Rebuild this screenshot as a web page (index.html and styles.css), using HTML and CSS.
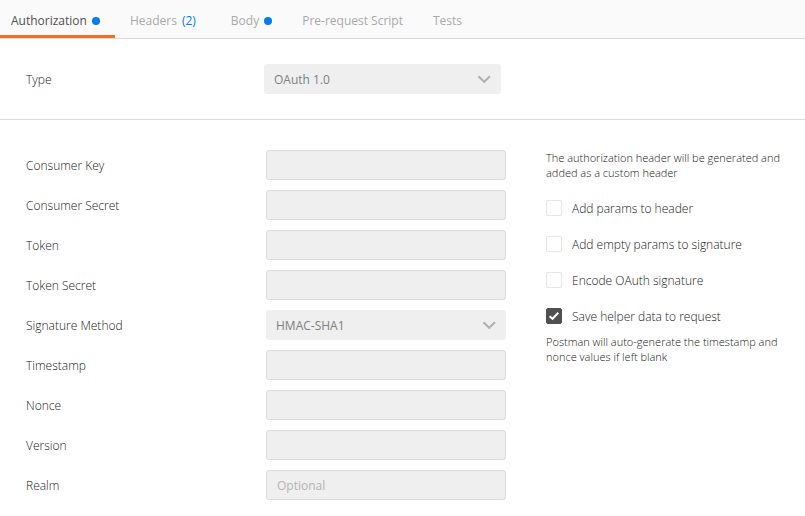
FILE: index.html
```html
<!DOCTYPE html>
<html lang="en">
<head>
<meta charset="utf-8">
<meta name="viewport" content="width=device-width, initial-scale=1">
<title>Authorization</title>
<link rel="stylesheet" href="styles.css">
</head>
<body>
<nav class="tabs">
  <button type="button" class="tab tab-active">Authorization<span class="dot"></span></button>
  <button type="button" class="tab tab-headers">Headers<span class="count">(2)</span></button>
  <button type="button" class="tab">Body<span class="dot"></span></button>
  <button type="button" class="tab">Pre-request Script</button>
  <button type="button" class="tab">Tests</button>
</nav>
<form>
  <section class="type-section">
    <label class="label" for="type">Type</label>
    <div class="select-wrap">
      <select id="type" class="select"><option>OAuth 1.0</option></select>
      <svg class="chevron" viewBox="0 0 14 9" aria-hidden="true"><path d="M1.4 1.2 7.2 6.8 13 1.2"/></svg>
    </div>
  </section>
  <section class="details">
    <div class="fields">
      <div class="field"><label class="label" for="consumer-key">Consumer Key</label><input id="consumer-key" class="input" type="text"></div>
      <div class="field"><label class="label" for="consumer-secret">Consumer Secret</label><input id="consumer-secret" class="input" type="text"></div>
      <div class="field"><label class="label" for="token">Token</label><input id="token" class="input" type="text"></div>
      <div class="field"><label class="label" for="token-secret">Token Secret</label><input id="token-secret" class="input" type="text"></div>
      <div class="field">
        <label class="label" for="method">Signature Method</label>
        <div class="select-wrap">
          <select id="method" class="select"><option>HMAC-SHA1</option></select>
          <svg class="chevron" viewBox="0 0 14 9" aria-hidden="true"><path d="M1.4 1.2 7.2 6.8 13 1.2"/></svg>
        </div>
      </div>
      <div class="field"><label class="label" for="timestamp">Timestamp</label><input id="timestamp" class="input" type="text"></div>
      <div class="field"><label class="label" for="nonce">Nonce</label><input id="nonce" class="input" type="text"></div>
      <div class="field"><label class="label" for="version">Version</label><input id="version" class="input" type="text"></div>
      <div class="field"><label class="label" for="realm">Realm</label><input id="realm" class="input" type="text" placeholder="Optional"></div>
    </div>
    <div class="options">
      <p class="note">The authorization header will be generated and added as a custom header</p>
      <div class="checks">
        <label class="check"><span class="box-wrap"><input type="checkbox" class="box"></span>Add params to header</label>
        <label class="check"><span class="box-wrap"><input type="checkbox" class="box"></span>Add empty params to signature</label>
        <label class="check"><span class="box-wrap"><input type="checkbox" class="box"></span>Encode OAuth signature</label>
        <label class="check"><span class="box-wrap"><input type="checkbox" class="box" checked><svg class="tick" viewBox="0 0 16 16" aria-hidden="true"><path d="M3.6 8.2 6.5 10.8 12.3 4.8"/></svg></span>Save helper data to request</label>
      </div>
      <p class="note">Postman will auto-generate the timestamp and nonce values if left blank</p>
    </div>
  </section>
</form>
</body>
</html>
```
FILE: styles.css
```css
* {
  box-sizing: border-box;
}

body {
  margin: 0;
  background: #fff;
  color: #505050;
  font: 12px/18px "Open Sans", sans-serif;
}

.tabs {
  display: flex;
  background: #fafafa;
  border-bottom: 1px solid #d9d9d9;
}

.tab {
  display: flex;
  align-items: center;
  gap: 5px;
  height: 38px;
  padding: 7px 15px 0;
  border: 0;
  border-bottom: 3px solid transparent;
  background: none;
  color: #a9a9a9;
  font: inherit;
  white-space: nowrap;
}

.tab-active {
  padding-left: 11px;
  border-bottom-color: #f07026;
  color: #505050;
}

.tab-headers {
  padding-right: 20px;
}

.dot {
  width: 8px;
  height: 8px;
  border-radius: 50%;
  background: #027bf3;
}

.count {
  color: #027bf3;
}

.type-section {
  display: grid;
  grid-template-columns: 238px 237px;
  align-items: center;
  padding: 25px 26px;
  border-bottom: 1px solid #d9d9d9;
}

.details {
  display: grid;
  grid-template-columns: 480px 1fr;
  gap: 40px;
  padding: 30px 10px 16px 26px;
}

.fields {
  display: grid;
  gap: 10px;
}

.field {
  display: grid;
  grid-template-columns: 1fr 1fr;
  align-items: center;
}

.label,
.options {
  color: #202020;
  font-weight: 300;
}

.label {
  padding-top: 2px;
}

.input,
.select {
  display: block;
  width: 100%;
  height: 30px;
  margin: 0;
  border: 1px solid #dbdbdb;
  border-radius: 3px;
  background: #efefef;
  color: #808080;
  font: inherit;
}

.input {
  padding: 0 10px;
}

.input::placeholder {
  color: #b4b4b4;
  opacity: 1;
}

.select {
  appearance: none;
  padding: 2px 30px 0 10px;
  border: 0;
}

.select-wrap {
  position: relative;
}

.chevron {
  position: absolute;
  top: 11px;
  right: 10px;
  width: 14px;
  height: 9px;
  pointer-events: none;
}

.chevron path {
  fill: none;
  stroke: #b0b0b0;
  stroke-width: 2;
}

.note {
  margin: 0;
  max-width: 244px;
  font-size: 11px;
  line-height: 15px;
}

.checks {
  display: grid;
  gap: 18px;
  margin: 20px 0 8px;
}

.check {
  display: flex;
  align-items: center;
  gap: 10px;
}

.box-wrap {
  position: relative;
  width: 16px;
  height: 16px;
  margin-bottom: 2px;
}

.box {
  appearance: none;
  display: block;
  width: 16px;
  height: 16px;
  margin: 0;
  border: 1px solid #e6e6e6;
  border-radius: 2px;
  background: #fff;
}

.box:checked {
  border-color: #505050;
  background: #505050;
}

.tick {
  position: absolute;
  inset: 0;
  pointer-events: none;
}

.tick path {
  fill: none;
  stroke: #fff;
  stroke-width: 2;
}
```
